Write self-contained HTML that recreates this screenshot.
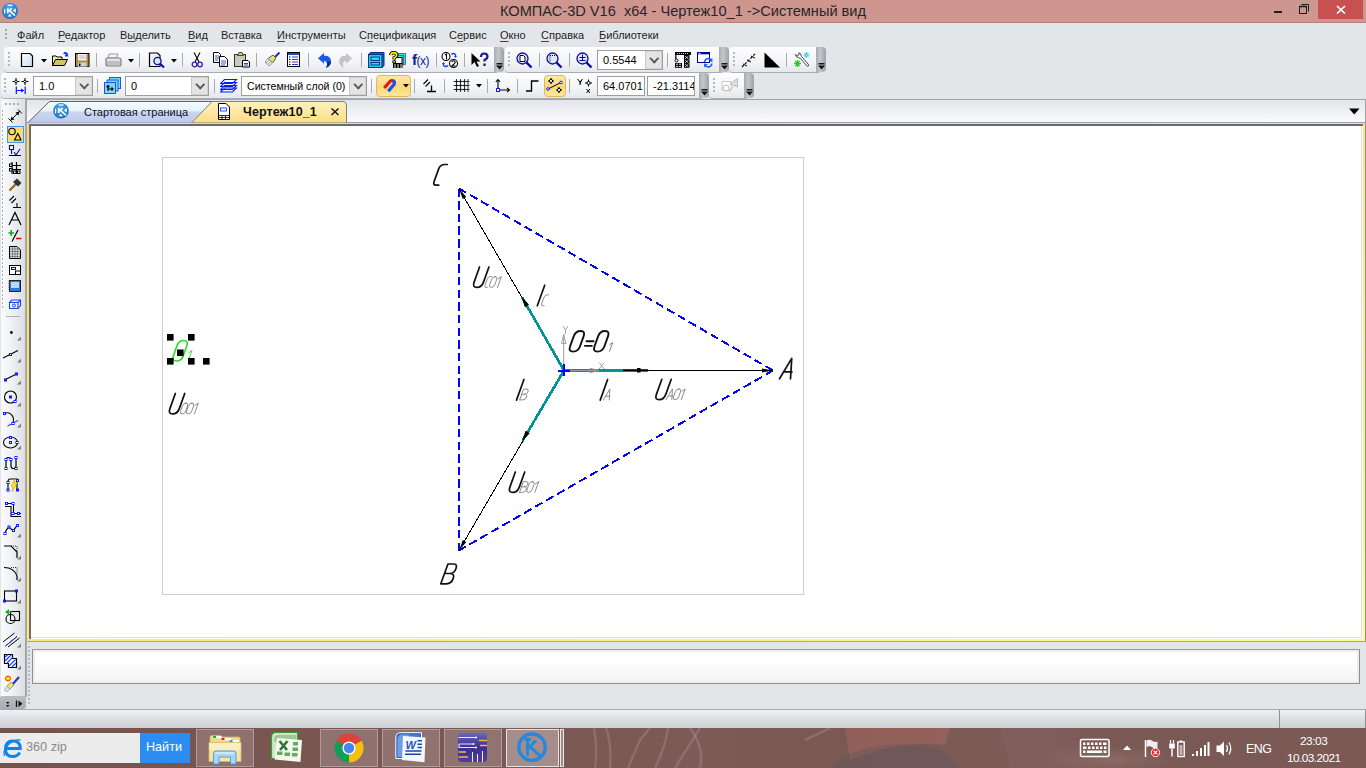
<!DOCTYPE html>
<html><head><meta charset="utf-8">
<style>
*{box-sizing:border-box}
html,body{margin:0;padding:0}
body{width:1366px;height:768px;overflow:hidden;position:relative;background:#E3E6E9;font-family:"Liberation Sans",sans-serif;color:#000}
.a{position:absolute}
#title{left:0;top:0;width:1366px;height:23px;background:#CF958F;border-bottom:1px solid #B5847F}
#title .t{left:500px;top:3px;font-size:14.6px;color:#26262a;white-space:pre}
#menu{left:0;top:23px;width:1366px;height:23px;background:#E3E6E9}
.mi{position:absolute;top:6px;font-size:11px;color:#1e1e1e;white-space:nowrap}
.mi u{text-decoration:underline;text-decoration-thickness:1px;text-underline-offset:1.5px;text-decoration-color:#444}
.tb{position:absolute;border-radius:4px;background:linear-gradient(#fdfdfe,#f3f4f6 60%,#e4e7eb);box-shadow:0 1px 0 #a9adb3}
.grip{position:absolute;width:10px;background:linear-gradient(90deg,#a7abb1,#c4c8cd 40%,#9da1a7);border-radius:0 4px 4px 0}
.sep{position:absolute;width:1px;background:#a8acb2}
.tbtn{top:729px;height:38px;background:rgba(255,255,255,0.17);border:1px solid rgba(255,255,255,0.3)}
.dots{width:2px;height:14px;background:repeating-linear-gradient(#b0b8c0 0 2px,transparent 2px 4px);}
.cb{position:absolute;background:#fff;border:1px solid #9e9e9e;font-size:11px;color:#000;padding:2px 0 0 5px;white-space:nowrap;overflow:hidden;line-height:14px}
.cb .dd{position:absolute;right:0;top:0;bottom:0;width:17px;background:#e4e4e4;border:1px solid #d2d2d2;border-left:1px solid #c8c8c8}
.cb .dd:after{content:"";position:absolute;left:4.5px;top:3px;width:4.5px;height:4.5px;border-right:2px solid #595959;border-bottom:2px solid #595959;transform:rotate(45deg)}
</style></head>
<body>
<!-- title bar -->
<div id="title" class="a">
  <svg class="a" style="left:1px;top:2px" width="18" height="18" viewBox="1 2 18 18"><defs><radialGradient id="klg" cx="0.45" cy="0.35" r="0.7"><stop offset="0" stop-color="#4fb0f5"/><stop offset="1" stop-color="#1665c0"/></radialGradient></defs><circle cx="10" cy="11" r="8" fill="url(#klg)"/><path d="M7.5 5.3H12.5" stroke="#fff" stroke-width="1.3"/><path d="M4.6 9V13.5" stroke="#fff" stroke-width="1.2"/><path d="M7.8 8.3V13.2M7.8 11.5L11.8 8.3M9.6 10.6L15 15.6" stroke="#fff" stroke-width="1.6" fill="none"/><path d="M12.8 10.5L15.8 8.3V12.8Z" fill="#fff"/><path d="M7.5 16.5L9.8 14L12 16.5Z" fill="#fff"/></svg>
  <div class="a t">КОМПАС-3D V16  x64 - Чертеж10_1 -&gt;Системный вид</div>
  <div class="a" style="left:1274px;top:11px;width:8px;height:2px;background:#1e1e1e"></div>
  <svg class="a" style="left:1298px;top:3px" width="12" height="12"><rect x="1.5" y="3.5" width="7" height="7" fill="none" stroke="#1e1e1e"/><path d="M1.5 3.5H8.5" stroke="#1e1e1e" stroke-width="1.6"/><path d="M3.5 1.5H10.5V8.5" fill="none" stroke="#1e1e1e"/></svg>
  <div class="a" style="left:1318px;top:0;width:45px;height:19px;background:#C75050"></div>
  <svg class="a" style="left:1336px;top:5px" width="10" height="9"><path d="M1 1L9 8.5M9 1L1 8.5" stroke="#fff" stroke-width="1.7"/></svg>
</div>

<!-- menu -->
<div id="menu" class="a">
  <div class="a" style="left:5px;top:6px;width:2px;height:12px;background:repeating-linear-gradient(#9ea5ad 0 2px,transparent 2px 4px)"></div>
  <span class="mi" style="left:17px"><u>Ф</u>айл</span>
  <span class="mi" style="left:58px"><u>Р</u>едактор</span>
  <span class="mi" style="left:120px">В<u>ы</u>делить</span>
  <span class="mi" style="left:188px"><u>В</u>ид</span>
  <span class="mi" style="left:221px">Вст<u>а</u>вка</span>
  <span class="mi" style="left:277px"><u>И</u>нструменты</span>
  <span class="mi" style="left:359px">С<u>п</u>ецификация</span>
  <span class="mi" style="left:449px">С<u>е</u>рвис</span>
  <span class="mi" style="left:500px"><u>О</u>кно</span>
  <span class="mi" style="left:541px"><u>С</u>правка</span>
  <span class="mi" style="left:599px"><u>Б</u>иблиотеки</span>
</div>

<!-- toolbars -->
<div id="tbars">
<!-- row1 panel1 -->
<div class="tb" style="left:4px;top:47px;width:495px;height:25px"></div>
<div class="grip" style="left:494px;top:47px;height:25px"></div>
<div class="tb" style="left:505px;top:47px;width:219px;height:25px"></div>
<div class="grip" style="left:719px;top:47px;height:25px"></div>
<div class="tb" style="left:729px;top:47px;width:92px;height:25px"></div>
<div class="grip" style="left:816px;top:47px;height:25px"></div>
<!-- row2 -->
<div class="tb" style="left:1px;top:73px;width:703px;height:25px"></div>
<div class="grip" style="left:699px;top:73px;height:25px"></div>
<div class="tb" style="left:709px;top:73px;width:40px;height:25px"></div>
<div class="grip" style="left:744px;top:73px;height:25px"></div>
<!-- grip glyphs -->
<svg class="a" style="left:496px;top:63px" width="7" height="7"><path d="M0.5 0.75H6.5" stroke="#1a1a1a" stroke-width="1.5"/><path d="M0 2.5H7L3.5 6.5Z" fill="#111"/></svg>
<svg class="a" style="left:721px;top:63px" width="7" height="7"><path d="M0.5 0.75H6.5" stroke="#1a1a1a" stroke-width="1.5"/><path d="M0 2.5H7L3.5 6.5Z" fill="#111"/></svg>
<svg class="a" style="left:818px;top:63px" width="7" height="7"><path d="M0.5 0.75H6.5" stroke="#1a1a1a" stroke-width="1.5"/><path d="M0 2.5H7L3.5 6.5Z" fill="#111"/></svg>
<svg class="a" style="left:701px;top:89px" width="7" height="7"><path d="M0.5 0.75H6.5" stroke="#1a1a1a" stroke-width="1.5"/><path d="M0 2.5H7L3.5 6.5Z" fill="#111"/></svg>
<svg class="a" style="left:746px;top:89px" width="7" height="7"><path d="M0.5 0.75H6.5" stroke="#1a1a1a" stroke-width="1.5"/><path d="M0 2.5H7L3.5 6.5Z" fill="#111"/></svg>
<!-- dots -->
<div class="a dots" style="left:8px;top:52px"></div>
<div class="a dots" style="left:508px;top:52px"></div>
<div class="a dots" style="left:733px;top:52px"></div>
<div class="a dots" style="left:4px;top:78px"></div>
<div class="a dots" style="left:713px;top:78px"></div>
<!-- row1 icons -->
<svg class="a" style="left:20px;top:52px" width="14" height="16"><defs><linearGradient id="gdoc" x1="0" y1="0" x2="1" y2="1"><stop offset="0" stop-color="#fff"/><stop offset="1" stop-color="#c8dcf0"/></linearGradient></defs><path d="M1.5 1.5H10L12.5 4V14.5H1.5Z" fill="url(#gdoc)" stroke="#000" stroke-width="1.2"/></svg>
<svg class="a" style="left:41px;top:59px" width="6" height="4"><path d="M0 0H6L3 3.5Z" fill="#000"/></svg>
<svg class="a" style="left:52px;top:51px" width="17" height="16"><path d="M12 3 Q13 0.5 15 3 L13.5 5" stroke="#0a3cff" stroke-width="1.8" fill="none"/><path d="M15.5 2.5 L16.5 5.5 L13 5.5Z" fill="#0a3cff"/><path d="M0.5 14.5V5H4L5 6H10V8" fill="#f3efb0" stroke="#000" stroke-width="1"/><path d="M0.5 14.5L3.5 8.5H15.5L12.5 14.5Z" fill="#cfc46a" stroke="#000" stroke-width="1"/></svg>
<svg class="a" style="left:75px;top:53px" width="15" height="14"><rect x="0.5" y="0.5" width="13.5" height="13.5" fill="#b08a45" stroke="#000"/><rect x="3" y="1" width="8.5" height="6.5" fill="#f4f4f4"/><path d="M4 3H10.5M4 5H10.5" stroke="#bbb"/><rect x="3" y="9.5" width="8.5" height="4" fill="#c3d6e8"/><rect x="4" y="10.5" width="1.5" height="2.5" fill="#000"/></svg>
<svg class="a" style="left:105px;top:53px" width="17" height="14"><path d="M4 1H13L11.5 5H3Z" fill="#f3f3f3" stroke="#999"/><path d="M1 6Q1 5 3 5H14Q16 5 16 7V12Q16 13 14 13H3Q1 13 1 11Z" fill="#e4e4e4" stroke="#7d7d7d" stroke-width="1.2"/><path d="M2 9H15M2 11H15" stroke="#9a9a9a"/></svg>
<svg class="a" style="left:128px;top:59px" width="6" height="4"><path d="M0 0H6L3 3.5Z" fill="#000"/></svg>
<svg class="a" style="left:148px;top:52px" width="18" height="17"><path d="M1.5 1H9.5L12 3.5V14.5H1.5Z" fill="#eef3fa" stroke="#000" stroke-width="1.2"/><circle cx="9.5" cy="9" r="3.6" fill="#d5e6f5" stroke="#0b0b9a" stroke-width="1.3"/><path d="M12 11.5L16 15.5" stroke="#0b0b9a" stroke-width="2"/></svg>
<svg class="a" style="left:171px;top:59px" width="6" height="4"><path d="M0 0H6L3 3.5Z" fill="#000"/></svg>
<svg class="a" style="left:191px;top:52px" width="13" height="16"><path d="M3 0.5L8 10M9 0.5L4 10" stroke="#000" stroke-width="1.1"/><circle cx="3.5" cy="12.5" r="2.3" fill="none" stroke="#3322aa" stroke-width="1.3"/><circle cx="9" cy="12.5" r="2.3" fill="none" stroke="#3322aa" stroke-width="1.3"/></svg>
<svg class="a" style="left:213px;top:52px" width="16" height="15"><path d="M0.5 0.5H5.5L7.5 2.5V10.5H0.5Z" fill="#fff" stroke="#000"/><path d="M2 4H6M2 6H6M2 8H5" stroke="#2244cc" stroke-width="0.9"/><path d="M6.5 4.5H11.5L14.5 7.5V14.5H6.5Z" fill="#fff" stroke="#000"/><path d="M8 9H13M8 11H13M8 13H12" stroke="#2244cc" stroke-width="0.9"/></svg>
<svg class="a" style="left:234px;top:52px" width="17" height="16"><rect x="0.5" y="2.5" width="11" height="12" fill="#c9c9c2" stroke="#333"/><path d="M3.5 3.5L5 0.5H8L9.5 3.5Z" fill="#e8c84a" stroke="#444"/><path d="M8.5 8.5H14L15.5 10V15H8.5Z" fill="#fff" stroke="#000"/><path d="M10 11.5H14M10 13H14" stroke="#2244cc"/></svg>
<svg class="a" style="left:264px;top:52px" width="17" height="16"><path d="M10 6L15.5 0.5" stroke="#2233aa" stroke-width="2"/><path d="M4 6.5L9 3L12 6L8.5 11Z" fill="#e8e070" stroke="#555"/><path d="M1 10L4 6.5L8.5 11L5 14Z" fill="#eee" stroke="#999"/><path d="M2 11L6 7.5M3.5 12.5L7.5 9" stroke="#aaa"/></svg>
<svg class="a" style="left:287px;top:52px" width="14" height="16"><rect x="0.5" y="0.5" width="12" height="14" fill="#fff" stroke="#000"/><rect x="1" y="1" width="11" height="2" fill="#2244cc"/><path d="M2 5H3.5M2 7.5H3.5M2 10H3.5M2 12.5H3.5" stroke="#000"/><path d="M5 5H11M5 7.5H11M5 10H11M5 12.5H11" stroke="#2244cc"/></svg>
<svg class="a" style="left:316px;top:51px" width="17" height="18" viewBox="316 51 17 18"><path d="M318,58.2 L324,53 V55.8 Q331,55.5 331,61.5 Q331,65.5 326,68 Q328,63.5 326.5,62 Q325.5,61 324,61 V63.7Z" fill="#1a5ae8"/><path d="M331,61.5 Q331,65.5 326,68 Q328,63.5 326.5,62Z" fill="#0a2aa0"/></svg>
<svg class="a" style="left:337px;top:51px" width="17" height="18" viewBox="337 51 17 18"><g transform="translate(670.1,0) scale(-1,1)"><path d="M318,58.2 L324,53 V55.8 Q331,55.5 331,61.5 Q331,65.5 326,68 Q328,63.5 326.5,62 Q325.5,61 324,61 V63.7Z" fill="#c4c4c4"/></g></svg>
<svg class="a" style="left:368px;top:52px" width="17" height="16"><path d="M0.5 2.5L2.5 0.5H16V13.5L14 15.5" fill="#1a6ab0" stroke="#0a2e8a"/><rect x="0.5" y="2.5" width="13.5" height="13" fill="#22e0f0" stroke="#0a2e8a" stroke-width="1.2"/><rect x="3" y="5" width="8.5" height="3.5" fill="#22e0f0" stroke="#0a2e8a"/><rect x="3" y="10.5" width="8.5" height="2.5" fill="#22e0f0" stroke="#0a2e8a"/></svg>
<svg class="a" style="left:388px;top:51px" width="19" height="18" viewBox="388 51 19 18"><rect x="398.5" y="53.5" width="7" height="11" fill="#22e6f0" stroke="#555" stroke-width="0.8"/><rect x="396.5" y="55.5" width="7" height="9.5" fill="#22e6f0" stroke="#555" stroke-width="0.8"/><rect x="394.5" y="57.5" width="7.5" height="6" fill="#fff" stroke="#000" stroke-width="1"/><rect x="393" y="63" width="9.5" height="5" fill="#000"/><path d="M394,65 H396 M397,65 H399 M400,65 H402 M394,67 H396 M397,67 H399 M400,67 H402" stroke="#fff" stroke-width="0.9"/><path d="M390.8,55.2 Q391,52.6 393.6,52.6 Q396.6,52.6 396.6,55 Q396.6,56.8 394.2,57.8 V59.5" stroke="#000" stroke-width="3.4" fill="none"/><rect x="392.4" y="60.5" width="3.6" height="2.6" fill="#000"/><path d="M390.8,55.2 Q391,52.6 393.6,52.6 Q396.6,52.6 396.6,55 Q396.6,56.8 394.2,57.8 V59.5" stroke="#fff000" stroke-width="1.6" fill="none"/><rect x="393.3" y="61.2" width="1.8" height="1.3" fill="#fff000"/></svg>
<div class="a" style="left:412px;top:51px;font-size:15px;color:#0a1a9a;font-family:'Liberation Sans';letter-spacing:-0.5px"><b>f</b><span style="font-size:12px">(x)</span></div>
<svg class="a" style="left:441px;top:51px" width="18" height="18"><circle cx="5" cy="5.5" r="4" fill="#fff" stroke="#000" stroke-width="1.1"/><path d="M4 4L5.5 3V8.5" stroke="#000" stroke-width="1.1" fill="none"/><circle cx="12.5" cy="12.5" r="4" fill="#fff" stroke="#000" stroke-width="1.1"/><path d="M10.8 11.2Q11 9.8 12.5 9.8Q14.2 9.8 14.2 11.3Q14.2 12.3 10.8 15H14.5" stroke="#000" stroke-width="1.1" fill="none"/><path d="M10.5 3.5Q12 1.5 14.5 3.5V6" stroke="#1a3cff" stroke-width="1.3" fill="none"/><path d="M13 5L14.5 7L16 5Z" fill="#1a3cff"/><path d="M7 14.5Q5 16.5 2.5 14.5V12" stroke="#1a3cff" stroke-width="1.3" fill="none"/><path d="M1 13L2.5 11L4 13Z" fill="#1a3cff"/></svg>
<svg class="a" style="left:471px;top:52px" width="18" height="16"><path d="M0.5 1V13L3.5 10L6 15L8 14L5.5 9.5H9.5Z" fill="#000"/><path d="M10 5Q10 1.5 13 1.5Q16.5 1.5 16.5 4.5Q16.5 6.5 13.5 8V9.5" stroke="#1a1a90" stroke-width="2.2" fill="none"/><rect x="12.3" y="11.5" width="2.4" height="2.4" fill="#1a1a90"/></svg>
<!-- panel2 row1 -->
<svg class="a" style="left:516px;top:52px" width="17" height="17"><circle cx="6.5" cy="6.5" r="5.5" fill="#d8e8f6" stroke="#0b0b9a" stroke-width="1.3"/><path d="M4 3.5H7.5L9 5V9.5H4Z" fill="#fff" stroke="#000"/><path d="M10.5 10.5L15.5 15.5" stroke="#0b0b9a" stroke-width="2.4"/></svg>
<svg class="a" style="left:546px;top:52px" width="17" height="17"><circle cx="6.5" cy="6.5" r="5.5" fill="#d8e8f6" stroke="#0b0b9a" stroke-width="1.3"/><path d="M4 3.5H11M4 3.5V10" stroke="#000" stroke-dasharray="1 1"/><path d="M10.5 10.5L15.5 15.5" stroke="#0b0b9a" stroke-width="2.4"/></svg>
<svg class="a" style="left:576px;top:52px" width="17" height="17"><circle cx="6.5" cy="6.5" r="5.5" fill="#d8e8f6" stroke="#0b0b9a" stroke-width="1.3"/><path d="M3.5 5.5H9.5M6.5 2.5V8.5M3.5 8.5H9.5" stroke="#0b0b9a"/><path d="M10.5 10.5L15.5 15.5" stroke="#0b0b9a" stroke-width="2.4"/></svg>
<div class="cb" style="left:597px;top:50px;width:66px;height:20px">0.5544<div class="dd"></div></div>
<svg class="a" style="left:674px;top:51px" width="18" height="18" viewBox="674 51 18 18"><rect x="675" y="52" width="16" height="3" fill="#000"/><path d="M677,53.5 H689" stroke="#fff" stroke-width="0.8" stroke-dasharray="1 1"/><path d="M675.8,55 V59" stroke="#000" stroke-width="1.2"/><circle cx="676.5" cy="60.5" r="1.5" fill="#fff" stroke="#000" stroke-width="1"/><rect x="675" y="63" width="7" height="4.8" fill="#000"/><path d="M676,64.2 H678 M679,64.2 H681 M676,66.4 H678 M679,66.4 H681" stroke="#fff" stroke-width="0.9"/><rect x="684" y="54" width="5.5" height="13.8" fill="#000"/><path d="M685,56 L688.5,59 M688.5,56 L685,59 M685,60 L688.5,63 M688.5,60 L685,63 M685,64 L688.5,67 M688.5,64 L685,67" stroke="#fff" stroke-width="0.7"/></svg>
<svg class="a" style="left:696px;top:51px" width="18" height="18" viewBox="696 51 18 18"><rect x="697.5" y="52.5" width="12" height="10" fill="#fff" stroke="#00008a" stroke-width="1"/><rect x="697.5" y="52.5" width="12" height="1.8" fill="#00008a"/><rect x="698.5" y="52.9" width="2" height="0.9" fill="#fff"/><path d="M704.5,62 A3.8,3.8 0 0 1 711,59.8" stroke="#1a5aff" stroke-width="1.6" fill="none"/><path d="M712.3,58 L712.5,62 L708.8,61.2Z" fill="#1a5aff"/><path d="M712,63.5 A3.8,3.8 0 0 1 705.5,65.7" stroke="#1a5aff" stroke-width="1.6" fill="none"/><path d="M704.2,67.5 L704,63.5 L707.7,64.3Z" fill="#1a5aff"/></svg>
<!-- panel3 row1 -->
<svg class="a" style="left:741px;top:52px" width="16" height="16"><path d="M1 15L15 1" stroke="#000" stroke-dasharray="2.5 1.5" stroke-width="1.1"/><path d="M2 12L6 14M6 8L10 10M10 4L14 6" stroke="#000"/></svg>
<svg class="a" style="left:764px;top:52px" width="17" height="16"><path d="M0.5 0.5V15.5H16Z" fill="#000"/></svg>
<svg class="a" style="left:793px;top:52px" width="18" height="17"><path d="M5.5 5.5Q3 5.5 2.5 2.5L4.3 3.8L6 2.8L5.8 0.8Q8.5 1.3 8.3 4.2L15.3 12.3Q16.3 14.3 14.3 14.3L7.3 6.3Z" fill="#fff" stroke="#333" stroke-width="0.9"/><g stroke="#22cc22" stroke-width="1.2"><path d="M1 11.5H8M4.5 8V15M2 9L7 14M7 9L2 14"/></g><circle cx="4.5" cy="11.5" r="1.3" fill="#22cc22"/><g stroke="#22c8e6" stroke-width="1"><path d="M10.5 3H16.5M13.5 0V6M11.3 0.8L15.7 5.2M15.7 0.8L11.3 5.2"/></g><circle cx="13.5" cy="3" r="1" fill="#fff" stroke="#22c8e6" stroke-width="0.8"/></svg>
<!-- row2 icons -->
<svg class="a" style="left:12px;top:77px" width="18" height="18"><path d="M0.5 4.5H7.5M4 1V8M9.5 4.5H16.5M13 1V8" stroke="#000" stroke-width="1"/><circle cx="4" cy="4.5" r="1.3" fill="#fff" stroke="#000" stroke-width="0.9"/><circle cx="13" cy="4.5" r="1.3" fill="#fff" stroke="#000" stroke-width="0.9"/><path d="M4.3 9.5V17M13.2 9.5V17M4.3 13.5H11.5" stroke="#0a1cff" stroke-width="1.2"/><path d="M12.5 13.5L9 11.5V15.5Z" fill="#0a1cff"/></svg>
<div class="cb" style="left:33px;top:76px;width:60px;height:20px">1.0<div class="dd"></div></div>
<svg class="a" style="left:104px;top:77px" width="18" height="18"><rect x="5.5" y="0.5" width="11" height="11" fill="#7dd6ff" stroke="#1a5ad8"/><rect x="3" y="3" width="11" height="11" fill="#7dd6ff" stroke="#1a5ad8"/><rect x="0.5" y="5.5" width="11" height="11" fill="#7dd6ff" stroke="#1a5ad8"/><path d="M4 14V8.5M2.5 10L4 8.5L5.5 10M4 12H9M7.5 10.5L9 12L7.5 13.5" stroke="#000" stroke-width="1.2" fill="none"/></svg>
<div class="cb" style="left:125px;top:76px;width:84px;height:20px">0<div class="dd"></div></div>
<svg class="a" style="left:220px;top:78px" width="18" height="15"><g fill="none" stroke="#0a1cff" stroke-width="1.1"><path d="M4.5 1.5H16.5L12.5 5.5H0.5Z"/><path d="M4.5 4.5H16.5L12.5 8.5H0.5Z"/><path d="M4.5 7.5H16.5L12.5 11.5H0.5Z"/><path d="M4.5 10H16.5L12.5 14H0.5Z"/></g></svg>
<div class="cb" style="left:241px;top:76px;width:126px;height:20px;font-size:10.6px">Системный слой (0)<div class="dd"></div></div>
<div class="a" style="left:376px;top:75px;width:35px;height:22px;border:1px solid #e2b65c;border-radius:4px;background:linear-gradient(#fde9a6,#fbd877 55%,#fde79b)"></div>
<svg class="a" style="left:380px;top:76px" width="20" height="20" viewBox="380 76 20 20"><path d="M385.3,86.8 L390.2,81.3 A2.4,2.4 0 0 1 393.9,81.5" stroke="#f01010" stroke-width="3.2" fill="none" stroke-linecap="square"/><path d="M393.9,81.5 A2.4,2.4 0 0 1 393.6,84.9 L389.3,90" stroke="#1650f0" stroke-width="3.2" fill="none" stroke-linecap="square"/></svg>
<svg class="a" style="left:403px;top:84px" width="6" height="4"><path d="M0 0H6L3 3.5Z" fill="#000"/></svg>
<svg class="a" style="left:423px;top:79px" width="14" height="14"><path d="M0.5 5L5 0.5M2.5 7.5L7 3" stroke="#000" stroke-width="1.1"/><path d="M4 12.5H13M8.5 6.5V12.5" stroke="#000" stroke-width="1.3"/></svg>
<svg class="a" style="left:453px;top:79px" width="17" height="14"><path d="M0.5 2.5H16.5M0.5 6.5H16.5M0.5 10.5H16.5M3.5 0V13M7.5 0V13M11.5 0V13M15 0V13" stroke="#222" stroke-width="0.9"/><g fill="#000"><rect x="2.7" y="1.7" width="1.6" height="1.6"/><rect x="6.7" y="1.7" width="1.6" height="1.6"/><rect x="10.7" y="1.7" width="1.6" height="1.6"/><rect x="2.7" y="5.7" width="1.6" height="1.6"/><rect x="6.7" y="5.7" width="1.6" height="1.6"/><rect x="10.7" y="5.7" width="1.6" height="1.6"/><rect x="2.7" y="9.7" width="1.6" height="1.6"/><rect x="6.7" y="9.7" width="1.6" height="1.6"/><rect x="10.7" y="9.7" width="1.6" height="1.6"/></g></svg>
<svg class="a" style="left:476px;top:84px" width="6" height="4"><path d="M0 0H6L3 3.5Z" fill="#000"/></svg>
<svg class="a" style="left:495px;top:78px" width="16" height="15"><path d="M3 12V1.5M0.8 4L3 1.5L5.2 4M3 12H14.5M12 9.8L14.5 12L12 14.2" stroke="#000" stroke-width="1.1" fill="none"/><rect x="1.5" y="10.5" width="3" height="3" fill="#fff" stroke="#0a1cff"/></svg>
<svg class="a" style="left:526px;top:80px" width="13" height="12"><path d="M0 11H5.5V1H12.5" stroke="#000" stroke-width="1.4" fill="none"/></svg>
<div class="a" style="left:544px;top:75px;width:22px;height:22px;border:1px solid #e2b65c;border-radius:4px;background:linear-gradient(#fde9a6,#fbd877 55%,#fde79b)"></div>
<svg class="a" style="left:546px;top:77px" width="18" height="18"><path d="M2 4H8M5 1V7M10 13H16M13 10V16" stroke="#000" stroke-width="1.1"/><circle cx="5" cy="4" r="1.6" fill="#fff" stroke="#000"/><circle cx="13" cy="13" r="1.6" fill="#fff" stroke="#000"/><path d="M2 12L16 5" stroke="#000"/><circle cx="2" cy="12" r="1.3" fill="#fff" stroke="#0a1cff"/><circle cx="15" cy="5.5" r="1.3" fill="#fff" stroke="#0a1cff"/></svg>
<svg class="a" style="left:577px;top:78px" width="16" height="16"><path d="M0.5 1L3 4M5.5 1L3 4V7" stroke="#000" stroke-width="1"/><path d="M8 5H15M11.5 1.5V8.5" stroke="#000" stroke-width="1"/><circle cx="11.5" cy="5" r="1.6" fill="#fff" stroke="#000"/><path d="M9.5 11L13 15M13 11L9.5 15" stroke="#000" stroke-width="1"/></svg>
<div class="cb" style="left:597px;top:76px;width:48px;height:20px">64.0701</div>
<div class="cb" style="left:647px;top:76px;width:48px;height:20px">-21.3114</div>
<svg class="a" style="left:721px;top:78px" width="18" height="16"><path d="M1 3.5H10V12H1Z" fill="#fff" stroke="#c9c9c9"/><circle cx="5" cy="10" r="3" fill="#fff" stroke="#bbb"/><path d="M9 6L16.5 0.5V9Z" fill="#ddd" stroke="#bbb"/><path d="M8 14L12 9" stroke="#bbb"/></svg>
<!-- separators row1 -->
<div class="sep" style="left:96px;top:53px;height:14px"></div>
<div class="sep" style="left:139px;top:53px;height:14px"></div>
<div class="sep" style="left:182px;top:53px;height:14px"></div>
<div class="sep" style="left:256px;top:53px;height:14px"></div>
<div class="sep" style="left:308px;top:53px;height:14px"></div>
<div class="sep" style="left:361px;top:53px;height:14px"></div>
<div class="sep" style="left:436px;top:53px;height:14px"></div>
<div class="sep" style="left:464px;top:53px;height:14px"></div>
<div class="sep" style="left:539px;top:53px;height:14px"></div>
<div class="sep" style="left:569px;top:53px;height:14px"></div>
<div class="sep" style="left:667px;top:53px;height:14px"></div>
<div class="sep" style="left:786px;top:53px;height:14px"></div>
<!-- separators row2 -->
<div class="sep" style="left:97px;top:79px;height:14px"></div>
<div class="sep" style="left:214px;top:79px;height:14px"></div>
<div class="sep" style="left:371px;top:79px;height:14px"></div>
<div class="sep" style="left:414px;top:79px;height:14px"></div>
<div class="sep" style="left:444px;top:79px;height:14px"></div>
<div class="sep" style="left:487px;top:79px;height:14px"></div>
<div class="sep" style="left:517px;top:79px;height:14px"></div>
<div class="sep" style="left:569px;top:79px;height:14px"></div>
</div>

<!-- left toolbar -->
<div id="ltb">
<div class="a" style="left:0;top:99px;width:27px;height:610px;background:#E3E6E9"></div>
<div class="a" style="left:1px;top:99px;width:24px;height:598px;background:linear-gradient(90deg,#fbfbfc,#f1f2f4 40%,#dcdfe3);border-radius:3px 3px 0 0"></div>
<div class="a" style="left:25px;top:99px;width:2px;height:598px;background:#a3a7ac"></div>
<div class="a" style="left:0;top:696px;width:26px;height:13px;background:linear-gradient(#b9bdc2,#a9adb3);border-radius:2px 0 3px 0"></div>
<svg class="a" style="left:0;top:99px" width="25" height="610" viewBox="0 99 25 610">
<g fill="#aab1b9"><rect x="5" y="103" width="2" height="2"/><rect x="9" y="103" width="2" height="2"/><rect x="13" y="103" width="2" height="2"/><rect x="17" y="103" width="2" height="2"/></g>
<path d="M2.5 110V310" stroke="#aab1b9" stroke-dasharray="2 2"/>
<!-- dimension -->
<path d="M10 121L20 111M8.5 118.5L12.5 122.5M18 109.5L22 113.5" stroke="#000" stroke-width="1"/><path d="M10.5 120.5L11.5 116.5L14.5 119.5ZM19.5 111.5L18.5 115.5L15.5 112.5Z" fill="#000"/>
<!-- highlighted -->
<rect x="7.5" y="126.5" width="16" height="16" fill="#ffd96a" stroke="#3d99f5"/>
<circle cx="12" cy="131.5" r="3.2" fill="none" stroke="#000" stroke-width="1.1"/>
<path d="M14.5 140H21L17.8 133.5Z" fill="none" stroke="#000" stroke-width="1.1"/>
<!-- icon3 -->
<rect x="9.5" y="145.5" width="4" height="4" fill="#fff" stroke="#0a0a9a" stroke-width="1.1"/>
<path d="M11.5 149.5V154M9 155.5H21M14 152L16 155L20 149" stroke="#0a0a9a" stroke-width="1.1" fill="none"/>
<path d="M9 155.5H21" stroke="#000"/>
<!-- grid -->
<path d="M12 162V174M16.5 162V174M9 165.5H21M9 169.5H21" stroke="#000" stroke-width="1.2"/>
<rect x="9.5" y="164" width="2.5" height="2.5" fill="#fff" stroke="#000" stroke-width="1"/><rect x="9.5" y="168.5" width="2.5" height="2.5" fill="#fff" stroke="#000" stroke-width="1"/><rect x="13.5" y="171" width="2.5" height="2.5" fill="#fff" stroke="#000" stroke-width="1"/><rect x="17.5" y="171" width="2.5" height="2.5" fill="#fff" stroke="#000" stroke-width="1"/>
<!-- hammer -->
<path d="M9.5 190.5L16 184" stroke="#9a6a20" stroke-width="2.4"/>
<path d="M13 182L17 178.5L21.5 183L18 186.5Z" fill="#333"/>
<!-- parallel perp -->
<path d="M9.5 200.5L14 196M11.5 203L16 198.5M13 207.5H21M17 203V207.5" stroke="#000" stroke-width="1.1"/>
<!-- compass -->
<path d="M9 225L15 212.5L21 225M11.5 220H18.5" stroke="#000" stroke-width="1.2" fill="none"/>
<!-- +/- -->
<path d="M8.5 233H14M11.2 230V236" stroke="#12b012" stroke-width="1.6"/>
<path d="M12 241.5L18 230" stroke="#000" stroke-width="1.2"/>
<path d="M16 238.5H21.5" stroke="#e01010" stroke-width="1.6"/>
<!-- doc grid -->
<path d="M9.5 246.5H17L20.5 250V258.5H9.5Z" fill="#ddd" stroke="#000"/>
<path d="M10 249H20M10 251.5H20M10 254H20M10 256.5H20M12.5 247V258M15 247V258M17.5 247V258" stroke="#555" stroke-width="0.6"/>
<!-- view frame -->
<rect x="9.5" y="265.5" width="11" height="9" fill="#fff" stroke="#000"/><rect x="11.5" y="267.5" width="4" height="2" fill="#fff" stroke="#0a0a9a"/><rect x="15.5" y="271" width="5" height="3.5" fill="#fff" stroke="#000"/>
<!-- blue frame -->
<rect x="9.5" y="280.5" width="11" height="11" fill="#2a7ae0" stroke="#000" stroke-width="0.8"/><rect x="11" y="282" width="8" height="6" fill="#bcd8fa"/>
<path d="M9 281V291" stroke="#555" stroke-dasharray="1 1"/>
<!-- cubes -->
<path d="M9.5 302.5L12 300H20.5V305.5L18 308.5H9.5Z" fill="none" stroke="#1a4ae0" stroke-width="1.1"/><path d="M9.5 302.5H18V308.5M18 302.5L20.5 300" stroke="#1a4ae0" stroke-width="1.1" fill="none"/><circle cx="14" cy="305.5" r="1.5" fill="none" stroke="#1a4ae0"/>
<!-- separator -->
<path d="M6 316.5H20" stroke="#b0b3b7"/>
<!-- point -->
<circle cx="11.4" cy="332.5" r="1.4" fill="#000"/>
<path d="M17 340.5H21V336.5Z" fill="#7d7f82"/>
<!-- aux line -->
<path d="M3 358L18 350.5" stroke="#000" stroke-width="1.1"/><rect x="9.5" y="353.5" width="2" height="2" fill="#fff" stroke="#0a1cff"/>
<path d="M17 362.5H21V358.5Z" fill="#7d7f82"/>
<!-- segment -->
<path d="M5.5 379.5L16.5 374" stroke="#000" stroke-width="1.1"/><rect x="4.5" y="379.0" width="2" height="2" fill="#fff" stroke="#0a1cff"/><rect x="15.5" y="373.0" width="2" height="2" fill="#fff" stroke="#0a1cff"/>
<path d="M17 384.5H21V380.5Z" fill="#7d7f82"/>
<!-- circle -->
<circle cx="10.5" cy="397" r="6" fill="none" stroke="#000" stroke-width="1.1"/><rect x="9.5" y="396.0" width="2" height="2" fill="#fff" stroke="#0a1cff"/><rect x="14.0" y="400.5" width="2" height="2" fill="#fff" stroke="#0a1cff"/>
<path d="M17 406.5H21V402.5Z" fill="#7d7f82"/>
<!-- arc -->
<path d="M4 413.5Q10 411 13 417Q14.5 421 12 424" stroke="#000" stroke-width="1.1" fill="none"/><path d="M7.5 426L18 420.5" stroke="#0a1cff" stroke-width="1"/><rect x="3.5" y="412.5" width="2" height="2" fill="#fff" stroke="#0a1cff"/><rect x="12.0" y="422.5" width="2" height="2" fill="#fff" stroke="#0a1cff"/>
<path d="M17 427.5H21V423.5Z" fill="#7d7f82"/>
<!-- ellipse -->
<ellipse cx="10.5" cy="442.5" rx="7" ry="5.5" fill="none" stroke="#000" stroke-width="1.1"/><rect x="9.5" y="436.5" width="2" height="2" fill="#fff" stroke="#0a1cff"/><rect x="9.5" y="441.5" width="2" height="2" fill="#fff" stroke="#0a1cff"/><rect x="16.0" y="441.5" width="2" height="2" fill="#fff" stroke="#0a1cff"/>
<path d="M17 449.5H21V445.5Z" fill="#7d7f82"/>
<!-- spline -->
<path d="M6 468V460Q6 457.5 8.5 457.5Q11 457.5 11 460V466Q11 468.5 13.5 468.5Q16 468.5 16 466V458" stroke="#000" stroke-width="1.2" fill="none"/><rect x="5.0" y="467.5" width="2" height="2" fill="#fff" stroke="#0a1cff"/><rect x="5.0" y="458.5" width="2" height="2" fill="#fff" stroke="#0a1cff"/><rect x="10.0" y="458.5" width="2" height="2" fill="#fff" stroke="#0a1cff"/><rect x="15.0" y="456.5" width="2" height="2" fill="#fff" stroke="#0a1cff"/><rect x="15.0" y="467.5" width="2" height="2" fill="#fff" stroke="#0a1cff"/>
<!-- lightning -->
<path d="M8 489V482Q8 479 10 479H17V490" stroke="#000" stroke-width="1.1" fill="none"/><path d="M11 486L15 478.5L14.5 483L17.5 482.5L12 492L13 487Z" fill="#ffe21a" stroke="#c8a000" stroke-width="0.5"/><rect x="7.0" y="489.0" width="2" height="2" fill="#fff" stroke="#0a1cff"/><rect x="7.0" y="481.5" width="2" height="2" fill="#fff" stroke="#0a1cff"/><rect x="16.5" y="489.0" width="2" height="2" fill="#fff" stroke="#0a1cff"/><rect x="16.5" y="479.5" width="2" height="2" fill="#fff" stroke="#0a1cff"/>
<!-- pipe -->
<path d="M5 503.5H13.5V513.5H21M5 506.5H11V516.5H21" stroke="#000" stroke-width="1.1" fill="none"/><rect x="5.5" y="502.5" width="2" height="2" fill="#fff" stroke="#0a1cff"/><rect x="12.0" y="502.5" width="2" height="2" fill="#fff" stroke="#0a1cff"/><rect x="12.0" y="512.5" width="2" height="2" fill="#fff" stroke="#0a1cff"/><rect x="17.5" y="512.5" width="2" height="2" fill="#fff" stroke="#0a1cff"/>
<!-- bezier -->
<path d="M5 533Q8 525 11 529Q14 532 17 525" stroke="#000" stroke-width="1.1" fill="none"/><rect x="4.0" y="532.5" width="2" height="2" fill="#fff" stroke="#0a1cff"/><rect x="8.0" y="526.0" width="2" height="2" fill="#fff" stroke="#0a1cff"/><rect x="12.5" y="529.5" width="2" height="2" fill="#fff" stroke="#0a1cff"/><rect x="16.5" y="524.5" width="2" height="2" fill="#fff" stroke="#0a1cff"/>
<path d="M17 537.5H21V533.5Z" fill="#7d7f82"/>
<!-- chamfer -->
<path d="M4 546H11L17 552V558" stroke="#000" stroke-width="1.2" fill="none"/><path d="M11 546H17V552" stroke="#000" stroke-dasharray="1 1" stroke-width="0.8" fill="none"/>
<path d="M17 559.5H21V555.5Z" fill="#7d7f82"/>
<!-- fillet -->
<path d="M4 567.5Q14 567.5 17 576V580" stroke="#000" stroke-width="1.2" fill="none"/><path d="M11 567.5H17V574" stroke="#000" stroke-dasharray="1 1" stroke-width="0.8" fill="none"/>
<path d="M17 581.5H21V577.5Z" fill="#7d7f82"/>
<!-- rect -->
<rect x="4.5" y="591" width="12" height="10" fill="none" stroke="#000" stroke-width="1.1"/><rect x="3.5" y="600.0" width="2" height="2" fill="#fff" stroke="#0a1cff"/><rect x="15.5" y="590.0" width="2" height="2" fill="#fff" stroke="#0a1cff"/>
<path d="M17 603.5H21V599.5Z" fill="#7d7f82"/>
<!-- rotate -->
<circle cx="10.5" cy="619" r="4.5" fill="none" stroke="#000" stroke-width="1.1"/><rect x="10.5" y="611.5" width="9" height="9" fill="none" stroke="#000" stroke-width="1.1"/><path d="M5 612L9 609V615Z" fill="#18b018"/><path d="M8 612H12" stroke="#18b018" stroke-width="1.3"/>
<!-- hatch lines -->
<path d="M3 642L14.5 633M5.5 646L17 636.5M8 647L19.5 638" stroke="#000" stroke-width="1"/><path d="M5.5 646L17 636.5" stroke="#1a3cff" stroke-width="1"/>
<path d="M17 647.5H21V643.5Z" fill="#7d7f82"/>
<!-- hatch area -->
<path d="M4.5 654.5H12.5V658.5H16.5V667.5H8.5V663.5H4.5Z" fill="#fff" stroke="#000" stroke-width="1.2"/><path d="M5 657L8 654.5M5 661L11 655M7 663L13 657M9 666L15.5 659.5M12 667L16 663" stroke="#1a3cff" stroke-width="1.1"/>
<path d="M17 669.5H21V665.5Z" fill="#7d7f82"/>
<!-- brush -->
<circle cx="8" cy="678.5" r="2.5" fill="#ffdd00" stroke="#f03000" stroke-width="1"/><path d="M12 685L19 677" stroke="#1a3cb0" stroke-width="2"/><path d="M7 686L11 682L14 685L10 689Z" fill="#e8e070" stroke="#666" stroke-width="0.6"/><path d="M4 690L7 686L10 689L7 692Z" fill="#ddd" stroke="#999" stroke-width="0.6"/>
<!-- bottom glyphs -->
<path d="M6 702H9.5L7.75 704Z M6 705H9.5L7.75 707Z" fill="#111"/>
<path d="M16.5 700.5V707" stroke="#111" stroke-width="1.3"/><path d="M18.5 700.5L22.5 703.75L18.5 707Z" fill="#111"/>
</svg>
</div>

<!-- tab bar -->
<div class="a" style="left:27px;top:99px;width:1339px;height:24px;background:linear-gradient(#e2e5e9,#f9fafb);border-top:1px solid #a4a4a4;border-bottom:1px solid #a0a0a8;border-right:1px solid #a0a0a0"></div>
<svg class="a" style="left:27px;top:99px" width="340" height="25" viewBox="27 99 340 25">
<defs>
<linearGradient id="gt1" x1="0" y1="0" x2="0" y2="1"><stop offset="0" stop-color="#f4fdff"/><stop offset="0.45" stop-color="#e6f3fb"/><stop offset="0.5" stop-color="#c9d7ef"/><stop offset="1" stop-color="#bccbea"/></linearGradient>
<linearGradient id="gt2" x1="0" y1="0" x2="0" y2="1"><stop offset="0" stop-color="#fdf0c0"/><stop offset="1" stop-color="#fbdf86"/></linearGradient>
</defs>
<path d="M28,122.5 L49.5,101.5 H212 L191.5,122.5Z" fill="url(#gt1)"/>
<path d="M28,122.5 L49.5,101.5 H212" fill="none" stroke="#5e6166" stroke-width="1"/>
<path d="M191.5,123 L212,101.5 H343 Q346.5,101.5 346.5,105 V123Z" fill="url(#gt2)" stroke="#7c7f84" stroke-width="1"/>
<!-- K logo -->
<g transform="translate(51,99.7)"><circle cx="10" cy="11" r="7.8" fill="url(#klg)"/><path d="M7.5 5.3H12.5" stroke="#fff" stroke-width="1.3"/><path d="M4.6 9V13.5" stroke="#fff" stroke-width="1.2"/><path d="M7.8 8.3V13.2M7.8 11.5L11.8 8.3M9.6 10.6L15 15.6" stroke="#fff" stroke-width="1.6" fill="none"/><path d="M12.8 10.5L15.8 8.3V12.8Z" fill="#fff"/><path d="M7.5 16.5L9.8 14L12 16.5Z" fill="#fff"/></g>
<!-- drawing icon -->
<path d="M218.5,103.5 H226 L229.5,107 V119.5 H218.5Z" fill="#fff" stroke="#000" stroke-width="1"/>
<rect x="220.5" y="108" width="6" height="3" fill="#fff" stroke="#1a3cff" stroke-width="0.9"/>
<path d="M218.5,115.5 H229.5 M218.5,117.5 H229.5 M222,115.5 V119.5 M225.5,115.5 V119.5" stroke="#000" stroke-width="0.8"/>
<path d="M331.5,108.5 L338.5,115 M338.5,108.5 L331.5,115" stroke="#111" stroke-width="1.4"/>
</svg>
<div class="a" style="left:84px;top:106px;font-size:11px;color:#0e0e1e;white-space:nowrap">Стартовая страница</div>
<div class="a" style="left:243px;top:105px;font-size:12.5px;font-weight:bold;color:#111;white-space:nowrap;letter-spacing:0.1px">Чертеж10_1</div>
<svg class="a" style="left:1349px;top:108px" width="11" height="7"><path d="M0 0.5H10.5L5.25 6.5Z" fill="#000"/></svg>

<!-- drawing area -->
<div class="a" style="left:25px;top:641px;width:1341px;height:1px;background:#a2a6ac"></div>
<div class="a" style="left:1365px;top:122px;width:1px;height:520px;background:#8e9299"></div>
<div class="a" style="left:27px;top:123px;width:1338px;height:518px;background:linear-gradient(160deg,#fdd96c,#fee77a 50%,#fff98a)"></div>
<div class="a" style="left:29px;top:124px;width:1334px;height:515px;background:#fff;border-top:2px solid #6b6b6b;border-left:2px solid #6e6e6e"></div>
<div class="a" style="left:31px;top:126px;width:1331px;height:512px;border-right:1px solid #dedede;border-bottom:1px solid #dedede"></div>

<!--DRAWING-->
<svg class="a" style="left:0;top:0" width="1366" height="768" viewBox="0 0 1366 768">
<rect x="162.5" y="157.5" width="641" height="437" fill="none" stroke="#cdcdcd" stroke-width="1"/>
<path d="M459,188.5 L773,370.5" stroke="#0000ff" stroke-width="2" stroke-dasharray="8.4 4.25" fill="none" shape-rendering="crispEdges"/>
<path d="M773,370.5 L459,550.5" stroke="#0000ff" stroke-width="2" stroke-dasharray="8.4 4.25" fill="none" shape-rendering="crispEdges"/>
<path d="M459,188.5 L459,550.5" stroke="#0000ff" stroke-width="2" stroke-dasharray="8.4 4.25" fill="none" shape-rendering="crispEdges"/>
<path d="M564,370.5 L459,188.5" stroke="#000" stroke-width="1" fill="none" shape-rendering="crispEdges"/>
<path d="M459.00,188.50 L466.23,197.03 L462.76,199.03Z" fill="#000"/>
<path d="M564,370.5 L773,370.5" stroke="#000" stroke-width="1" fill="none" shape-rendering="crispEdges"/>
<path d="M773.00,370.50 L762.00,372.50 L762.00,368.50Z" fill="#000"/>
<path d="M564,370.5 L459,550.5" stroke="#000" stroke-width="1" fill="none" shape-rendering="crispEdges"/>
<path d="M459.00,550.50 L462.82,539.99 L466.27,542.01Z" fill="#000"/>
<path d="M564,370.5 L522,297.2" stroke="#009494" stroke-width="2.7" fill="none" shape-rendering="crispEdges"/>
<path d="M564,370.5 L522.4,441" stroke="#009494" stroke-width="2.7" fill="none" shape-rendering="crispEdges"/>
<path d="M564,370.5 L648,370.5" stroke="#009494" stroke-width="2.7" fill="none" shape-rendering="crispEdges"/>
<path d="M521.50,296.50 L529.06,304.84 L524.90,307.23Z" fill="#000"/>
<path d="M522.00,441.50 L525.53,430.81 L529.67,433.25Z" fill="#000"/>
<path d="M623,370.3 H648" stroke="#000" stroke-width="1.6"/>
<rect x="637" y="368" width="3.5" height="4.5" fill="#000"/>
<path d="M563.7,370.5 V334 M563.7,370.5 H599" stroke="#9a9a9a" stroke-width="1"/>
<path d="M561.5,343.5 L563.7,334.5 L566,343.5Z" fill="none" stroke="#9a9a9a" stroke-width="0.9"/>
<path d="M590,368.2 L598.5,370.5 L590,372.8Z" fill="none" stroke="#9a9a9a" stroke-width="0.9"/>
<path d="M562.9,326 L565.5,330 L568,326 M565.5,330 V334" stroke="#9a9a9a" stroke-width="0.9" fill="none"/>
<path d="M599.2,362.5 L604,369 M604,362.5 L599.2,369" stroke="#9a9a9a" stroke-width="0.9" fill="none"/>
<path d="M558,370.5 H570 M564,364 V376" stroke="#0000ff" stroke-width="2" shape-rendering="crispEdges"/>
<path d="M 447.25,164.50 L 444.57,164.50 Q 440.45,164.50 438.76,168.62 L 434.02,181.80 Q 432.83,185.10 435.92,185.10 L 438.80,185.10" fill="none" stroke="#111" stroke-width="1.7" stroke-linecap="round" stroke-linejoin="round"/>
<path d="M 779.50,378.80 L 791.74,358.40 L 790.52,378.80 M 784.44,371.86 L 791.99,371.86" fill="none" stroke="#111" stroke-width="1.7" stroke-linecap="round" stroke-linejoin="round"/>
<path d="M 440.80,583.80 L 447.93,564.00 L 453.87,564.00 Q 457.63,564.00 455.92,568.75 Q 454.21,573.50 450.05,573.50 L 444.51,573.50 M 450.05,573.50 Q 455.00,573.50 453.15,578.65 Q 451.29,583.80 446.34,583.80 L 440.80,583.80" fill="none" stroke="#111" stroke-width="1.7" stroke-linecap="round" stroke-linejoin="round"/>
<path d="M 580.56,331.00 Q 585.50,331.00 583.58,336.36 L 580.02,346.24 Q 578.09,351.60 573.14,351.60 Q 568.20,351.60 570.13,346.24 L 573.69,336.36 Q 575.62,331.00 580.56,331.00 Z" fill="none" stroke="#111" stroke-width="1.9" stroke-linecap="round" stroke-linejoin="round"/>
<path d="M 586.53,341.30 L 593.54,341.30 M 584.90,345.83 L 591.90,345.83" fill="none" stroke="#111" stroke-width="1.9" stroke-linecap="round" stroke-linejoin="round"/>
<path d="M 604.96,331.00 Q 609.90,331.00 607.98,336.36 L 604.42,346.24 Q 602.49,351.60 597.54,351.60 Q 592.60,351.60 594.53,346.24 L 598.09,336.36 Q 600.02,331.00 604.96,331.00 Z" fill="none" stroke="#111" stroke-width="1.9" stroke-linecap="round" stroke-linejoin="round"/>
<path d="M 609.94,344.54 L 612.66,342.60 L 609.49,351.40" fill="none" stroke="#707070" stroke-width="0.9" stroke-linecap="round" stroke-linejoin="round"/>
<path d="M 479.54,267.00 L 474.11,282.10 Q 472.20,287.40 476.89,287.40 Q 481.58,287.40 483.49,282.10 L 488.93,267.00" fill="none" stroke="#111" stroke-width="1.7" stroke-linecap="round" stroke-linejoin="round"/><path d="M 491.80,276.60 L 490.40,276.60 Q 488.24,276.60 487.35,278.76 L 484.86,285.67 Q 484.24,287.40 485.86,287.40 L 487.37,287.40 M 495.15,276.60 Q 497.74,276.60 496.73,279.41 L 494.86,284.59 Q 493.85,287.40 491.26,287.40 Q 488.67,287.40 489.68,284.59 L 491.55,279.41 Q 492.56,276.60 495.15,276.60 Z M 498.07,278.98 L 501.41,276.60 L 497.52,287.40" fill="none" stroke="#707070" stroke-width="0.8" stroke-linecap="round" stroke-linejoin="round"/>
<path d="M 661.84,379.30 L 656.41,394.40 Q 654.50,399.70 659.19,399.70 Q 663.88,399.70 665.79,394.40 L 671.23,379.30" fill="none" stroke="#111" stroke-width="1.7" stroke-linecap="round" stroke-linejoin="round"/><path d="M 666.00,399.70 L 672.48,388.90 L 671.83,399.70 M 668.62,396.03 L 672.61,396.03 M 678.96,388.90 Q 681.55,388.90 680.54,391.71 L 678.67,396.89 Q 677.66,399.70 675.07,399.70 Q 672.48,399.70 673.49,396.89 L 675.36,391.71 Q 676.37,388.90 678.96,388.90 Z M 681.88,391.28 L 685.22,388.90 L 681.34,399.70" fill="none" stroke="#707070" stroke-width="0.8" stroke-linecap="round" stroke-linejoin="round"/>
<path d="M 515.34,472.00 L 509.91,487.10 Q 508.00,492.40 512.69,492.40 Q 517.38,492.40 519.29,487.10 L 524.73,472.00" fill="none" stroke="#111" stroke-width="1.7" stroke-linecap="round" stroke-linejoin="round"/><path d="M 519.50,492.40 L 523.39,481.60 L 526.63,481.60 Q 528.68,481.60 527.75,484.19 Q 526.81,486.78 524.55,486.78 L 521.52,486.78 M 524.55,486.78 Q 527.25,486.78 526.23,489.59 Q 525.22,492.40 522.52,492.40 L 519.50,492.40 M 532.46,481.60 Q 535.05,481.60 534.04,484.41 L 532.17,489.59 Q 531.16,492.40 528.57,492.40 Q 525.98,492.40 526.99,489.59 L 528.86,484.41 Q 529.87,481.60 532.46,481.60 Z M 535.38,483.98 L 538.72,481.60 L 534.84,492.40" fill="none" stroke="#707070" stroke-width="0.8" stroke-linecap="round" stroke-linejoin="round"/>
<path d="M 175.34,393.50 L 169.91,408.60 Q 168.00,413.90 172.69,413.90 Q 177.38,413.90 179.29,408.60 L 184.73,393.50" fill="none" stroke="#111" stroke-width="1.7" stroke-linecap="round" stroke-linejoin="round"/><path d="M 185.98,403.10 Q 188.57,403.10 187.56,405.91 L 185.69,411.09 Q 184.68,413.90 182.09,413.90 Q 179.50,413.90 180.51,411.09 L 182.38,405.91 Q 183.39,403.10 185.98,403.10 Z M 192.03,403.10 Q 194.62,403.10 193.61,405.91 L 191.74,411.09 Q 190.73,413.90 188.14,413.90 Q 185.55,413.90 186.56,411.09 L 188.43,405.91 Q 189.44,403.10 192.03,403.10 Z M 194.95,405.48 L 198.29,403.10 L 194.40,413.90" fill="none" stroke="#707070" stroke-width="0.8" stroke-linecap="round" stroke-linejoin="round"/>
<path d="M 544.72,285.20 L 537.30,305.80" fill="none" stroke="#111" stroke-width="1.7" stroke-linecap="round" stroke-linejoin="round"/><path d="M 548.60,294.80 L 547.20,294.80 Q 545.04,294.80 544.15,296.96 L 541.66,303.87 Q 541.04,305.60 542.66,305.60 L 544.17,305.60" fill="none" stroke="#707070" stroke-width="0.8" stroke-linecap="round" stroke-linejoin="round"/>
<path d="M 523.92,379.50 L 516.50,400.10" fill="none" stroke="#111" stroke-width="1.7" stroke-linecap="round" stroke-linejoin="round"/><path d="M 519.70,399.90 L 523.59,389.10 L 526.83,389.10 Q 528.88,389.10 527.95,391.69 Q 527.01,394.28 524.75,394.28 L 521.72,394.28 M 524.75,394.28 Q 527.45,394.28 526.43,397.09 Q 525.42,399.90 522.72,399.90 L 519.70,399.90" fill="none" stroke="#707070" stroke-width="0.8" stroke-linecap="round" stroke-linejoin="round"/>
<path d="M 607.62,379.50 L 600.20,400.10" fill="none" stroke="#111" stroke-width="1.7" stroke-linecap="round" stroke-linejoin="round"/><path d="M 603.40,399.90 L 609.88,389.10 L 609.23,399.90 M 606.02,396.23 L 610.01,396.23" fill="none" stroke="#707070" stroke-width="0.8" stroke-linecap="round" stroke-linejoin="round"/>
<path d="M 183.80,340.50 Q 188.72,340.50 186.80,345.83 L 183.26,355.67 Q 181.34,361.00 176.42,361.00 Q 171.50,361.00 173.42,355.67 L 176.96,345.83 Q 178.88,340.50 183.80,340.50 Z" fill="none" stroke="#22dd22" stroke-width="1.6" stroke-linecap="round" stroke-linejoin="round"/>
<path d="M 188.76,352.81 L 192.01,350.50 L 188.23,361.00" fill="none" stroke="#22dd22" stroke-width="0.9" stroke-linecap="round" stroke-linejoin="round"/>
<rect x="167" y="334" width="6.6" height="6.6" fill="#000"/>
<rect x="188" y="334" width="6.6" height="6.6" fill="#000"/>
<rect x="177" y="349.5" width="6.6" height="6.6" fill="#000"/>
<rect x="167" y="358" width="6.6" height="6.6" fill="#000"/>
<rect x="188" y="358" width="6.6" height="6.6" fill="#000"/>
<rect x="203" y="358" width="6.6" height="6.6" fill="#000"/>
</svg>
<!--/DRAWING-->
<!-- command panel -->
<div class="a" style="left:32px;top:649px;width:1328px;height:35px;background:linear-gradient(#fff 30%,#f3f3f4);border:1px solid #8e8e8e;border-top-color:#9a9a9a;box-shadow:inset 0 0 0 2px #eeeeee"></div>

<div class="a" style="left:28px;top:646px;width:2px;height:58px;background:repeating-linear-gradient(#b3b9bf 0 2px,transparent 2px 4px)"></div>
<!-- status bar -->
<div class="a" style="left:0;top:709px;width:1366px;height:19px;background:linear-gradient(#eef0f2,#dcdfe2 50%,#cdd0d4);border-top:1px solid #a6aaae"></div>
<div class="a" style="left:1279px;top:710px;width:1px;height:18px;background:#8e9296"></div>
<div class="a" style="left:1365px;top:710px;width:1px;height:18px;background:#8e9296"></div>

<!-- taskbar -->
<div class="a" style="left:0;top:728px;width:1366px;height:40px;background:linear-gradient(90deg,#74524e 0,#795652 300px,#7a5853 560px,#7c5a56 700px,#7a5853 850px,#7d5c58 1000px,#7a5854 1100px,#7b5955 1366px)"></div>
<svg class="a" style="left:560px;top:728px" width="520" height="40" viewBox="560 728 520 40">
<g stroke="rgba(205,185,180,0.22)" stroke-width="2.5" fill="none">
<path d="M595,768 Q598,750 594,728"/><path d="M610,768 Q612,745 606,728"/><path d="M628,768 L640,740 L650,728"/><path d="M655,768 Q665,748 668,728"/><path d="M675,768 L700,728"/><path d="M700,768 Q705,748 690,728"/><path d="M805,740 L830,728"/>
</g>
<path d="M845,728 H950 L945,745 Q900,740 850,760Z" fill="rgba(185,110,100,0.35)"/>
<path d="M830,768 Q860,740 920,745 Q950,748 960,768Z" fill="rgba(95,85,95,0.35)"/>
<path d="M1000,728 H1080 V768 H1010Z" fill="rgba(160,130,125,0.1)"/>
</svg>
<div class="a" style="left:1040px;top:745px;width:140px;height:30px;background:radial-gradient(closest-side,rgba(170,135,130,0.35),rgba(0,0,0,0))"></div>
<div class="a" style="left:0;top:733px;width:140px;height:30px;background:#ececec"></div>
<svg class="a" style="left:0;top:732px" width="26" height="32" viewBox="0 732 26 32"><path d="M6.2,748.5 H20.2 Q20.5,741 12.8,741 Q5.5,741 5.5,749 Q5.5,756.5 12.8,756.5 Q17.5,756.5 19.8,752.5" fill="none" stroke="#0a84f5" stroke-width="3"/><path d="M4.5,756 Q2.5,751 8,745 Q14,739 20.5,740" fill="none" stroke="#0a84f5" stroke-width="1.3"/></svg>
<div class="a" style="left:26px;top:740px;font-size:12.7px;color:#8a8a8a;white-space:nowrap">360 zip</div>
<div class="a" style="left:140px;top:733px;width:50px;height:30px;background:#2b8df2"></div>
<div class="a" style="left:146px;top:740px;font-size:12.6px;color:#fff;white-space:nowrap">Найти</div>
<!-- taskbar buttons -->
<div class="a tbtn" style="left:196px;width:58px"></div>
<div class="a tbtn" style="left:320px;width:58px"></div>
<div class="a tbtn" style="left:382px;width:58px"></div>
<div class="a tbtn" style="left:444px;width:58px"></div>
<div class="a tbtn" style="left:506px;width:53px;background:rgba(255,255,255,0.32);border-color:rgba(255,255,255,0.75)"></div>
<div class="a tbtn" style="left:560px;width:4px;background:rgba(255,255,255,0.3);border-color:rgba(255,255,255,0.8)"></div>
<svg class="a" style="left:0;top:728px" width="1366" height="40" viewBox="0 728 1366 40">
<!-- explorer -->
<path d="M210,737 Q210,735.5 211.5,735.5 H220 Q221.5,735.5 222,737 H239 Q240,737 240,738.5 V760 H210Z" fill="#f0d98a" stroke="#d4b45a" stroke-width="0.8"/>
<rect x="212.5" y="736" width="9" height="2.2" fill="#fff"/><rect x="213" y="736" width="3" height="2" fill="#20b020"/>
<rect x="221" y="738" width="10" height="2.2" fill="#fff"/><rect x="221.5" y="738" width="3" height="2" fill="#e02020"/>
<rect x="229" y="740.2" width="10" height="2.2" fill="#fff"/><rect x="229.5" y="740.2" width="3" height="2" fill="#2090f0"/>
<path d="M209,742.5 H241 V761.5 H209Z" fill="#f6e4a2" stroke="#d9bb60" stroke-width="0.8"/>
<path d="M209.5,743 H240.5 V750 H209.5Z" fill="#faefc4"/>
<path d="M213.5,764 V753.5 Q213.5,751 216,751 H233.5 Q236,751 236,753.5 V764 H230.5 V757 H219 V764Z" fill="#a8d8f6" stroke="#4a9ad8" stroke-width="0.9"/>
<path d="M215,753 H234" stroke="#e6f6ff" stroke-width="1.2"/>
<!-- excel -->
<path d="M276,732.5 H297.5 V758.5 H271.5 V737 Q271.5,732.5 276,732.5Z" fill="#cfe6c8" stroke="#3aa02a" stroke-width="1.2"/>
<path d="M274,740 Q274,735 278,735 H296 V742 H274Z" fill="#9cc898"/>
<path d="M277,738 L302,740 L300.5,762 L274.5,759.5Z" fill="#f3f8ee"/>
<path d="M279.5,741 L287,750 M287.5,741 L280,750" stroke="#2a7a2a" stroke-width="2.6"/>
<g fill="#6aaa60"><rect x="293" y="742" width="5" height="3.5"/><rect x="292.5" y="747.5" width="5.5" height="3.5"/><rect x="277" y="751.5" width="5.5" height="3.5"/><rect x="284.5" y="752.5" width="5.5" height="3.5"/><rect x="292" y="753" width="5.5" height="3.5"/></g>
<!-- chrome -->
<path d="M349,748 L336.44,740.75 A14.5,14.5 0 0 1 361.56,740.75Z" fill="#db4437"/><path d="M349,748 L361.56,740.75 A14.5,14.5 0 0 1 349.00,762.50Z" fill="#f4c20d"/><path d="M349,748 L349.00,762.50 A14.5,14.5 0 0 1 336.44,740.75Z" fill="#0f9d58"/><circle cx="349" cy="748" r="6.6" fill="#fff"/><circle cx="349" cy="748" r="5.2" fill="#4285f4"/>
<!-- word -->
<path d="M400.5,732.7 H421.5 V758.5 H395.8 V738 Q395.8,732.7 400.5,732.7Z" fill="#2d62c4" stroke="#ffffff" stroke-width="1"/>
<path d="M400,734.5 H420 V757 H397.5 V739Z" fill="#3f7ad8"/>
<path d="M397.5,739 Q398,734.5 402,734.5 H409 L403,757 H397.5Z" fill="#6f9ee6"/>
<path d="M403,736 L425.5,737.5 L424.5,762.3 L402,760Z" fill="#f4f7fb"/>
<text x="405.5" y="748.5" font-size="11" font-weight="bold" font-style="italic" fill="#2855b8" font-family="Liberation Sans" letter-spacing="-1">W</text>
<path d="M417.5,740.8 H422 M417.5,744.2 H422 M417.5,747.6 H422 M405.5,751 H421.5 M405,754.2 H421" stroke="#1f47a8" stroke-width="1.5"/>
<!-- app -->
<defs><linearGradient id="gapp" x1="0" y1="0" x2="0" y2="1"><stop offset="0" stop-color="#6a66c0"/><stop offset="0.5" stop-color="#3c2f8c"/><stop offset="1" stop-color="#4a3fa0"/></linearGradient></defs>
<rect x="458" y="733" width="29" height="29" rx="4" fill="url(#gapp)"/>
<path d="M458.5,737.5 H476 M459,744 V747.5 H476 M459,744 H473" stroke="#e8e6f6" stroke-width="1.1" fill="none"/>
<circle cx="476" cy="737.5" r="1" fill="#fff"/><circle cx="473.5" cy="744" r="1" fill="#fff"/><circle cx="476" cy="747.5" r="1" fill="#fff"/>
<path d="M479,740.5 H487 M480,745.5 H487 M458.5,752 H466 M458.5,757 H468" stroke="#f2b44a" stroke-width="1.3"/>
<path d="M472.5,762 V752 M477.5,762 V754 M482.5,762 V751" stroke="#f0f0fa" stroke-width="1"/>
<!-- kompas -->
<circle cx="532" cy="747.2" r="13.2" fill="none" stroke="#2288e0" stroke-width="3.4"/>
<path d="M527.5,739 V756 M527.5,749 L536,740.5 M524.5,739.5 H531 M529.5,746.5 L541.5,757" stroke="#2288e0" stroke-width="3" fill="none"/>
<!-- tray -->
<rect x="1080.5" y="739.5" width="28.5" height="17" fill="none" stroke="#fff" stroke-width="1.5" rx="1.5"/>
<g fill="#fff"><rect x="1083" y="742.5" width="2.5" height="2.5"/><rect x="1087" y="742.5" width="2.5" height="2.5"/><rect x="1091" y="742.5" width="2.5" height="2.5"/><rect x="1095" y="742.5" width="2.5" height="2.5"/><rect x="1099" y="742.5" width="2.5" height="2.5"/><rect x="1103" y="742.5" width="3.5" height="2.5"/>
<rect x="1083" y="746.5" width="3.5" height="2.5"/><rect x="1088" y="746.5" width="2.5" height="2.5"/><rect x="1092" y="746.5" width="2.5" height="2.5"/><rect x="1096" y="746.5" width="2.5" height="2.5"/><rect x="1100" y="746.5" width="2.5" height="2.5"/><rect x="1104" y="746.5" width="2.5" height="2.5"/>
<rect x="1083" y="750.5" width="2.5" height="2.5"/><rect x="1087" y="750.5" width="15" height="2.5"/><rect x="1103.5" y="750.5" width="3" height="2.5"/></g>
<path d="M1123,750 L1127,745.5 L1131,750Z" fill="#fff"/>
<path d="M1145.5,757 V740" stroke="#fff" stroke-width="1.5"/><path d="M1146.5,740.5 Q1150,739 1152.5,741 Q1155,742.5 1157.5,741.5 V748 Q1155,749 1152.5,747.5 Q1150,745.5 1146.5,747Z" fill="#f2eeee"/>
<circle cx="1155.5" cy="752.5" r="4.2" fill="#e02828" stroke="#fff" stroke-width="0.9"/><path d="M1153.6,750.6 L1157.4,754.4 M1157.4,750.6 L1153.6,754.4" stroke="#fff" stroke-width="1.2"/>
<path d="M1170.5,740 V743.5 M1173.5,740 V743.5" stroke="#fff" stroke-width="1.2"/><rect x="1169.2" y="743.5" width="5.6" height="5" fill="#fff"/><path d="M1172,748.5 V756.5" stroke="#fff" stroke-width="1.5"/>
<rect x="1177.8" y="742" width="6.4" height="14.5" fill="none" stroke="#fff" stroke-width="1.4"/><rect x="1179.5" y="740.5" width="3" height="1.5" fill="#fff"/><rect x="1179.5" y="745" width="3" height="10" fill="#fff" opacity="0.55"/>
<path d="M1193,756 V754 M1197,756 V751 M1201,756 V748 M1205,756 V745 M1208.5,756 V742" stroke="#fff" stroke-width="2"/>
<path d="M1216.5,745.5 H1220 L1224,741.5 V756 L1220,752 H1216.5Z" fill="#fff"/>
<path d="M1226.5,745 Q1228.5,748.5 1226.5,752 M1229,742.5 Q1232.5,748.5 1229,754.5" stroke="#fff" stroke-width="1.2" fill="none"/>
</svg>
<div class="a" style="left:1246px;top:742px;font-size:12.4px;color:#fff;white-space:nowrap;letter-spacing:-0.5px">ENG</div>
<div class="a" style="left:1300px;top:734px;font-size:11.8px;color:#fff;white-space:nowrap;letter-spacing:-0.45px">23:03</div>
<div class="a" style="left:1287px;top:751px;font-size:11.8px;color:#fff;white-space:nowrap;letter-spacing:-0.55px">10.03.2021</div>

</body></html>
